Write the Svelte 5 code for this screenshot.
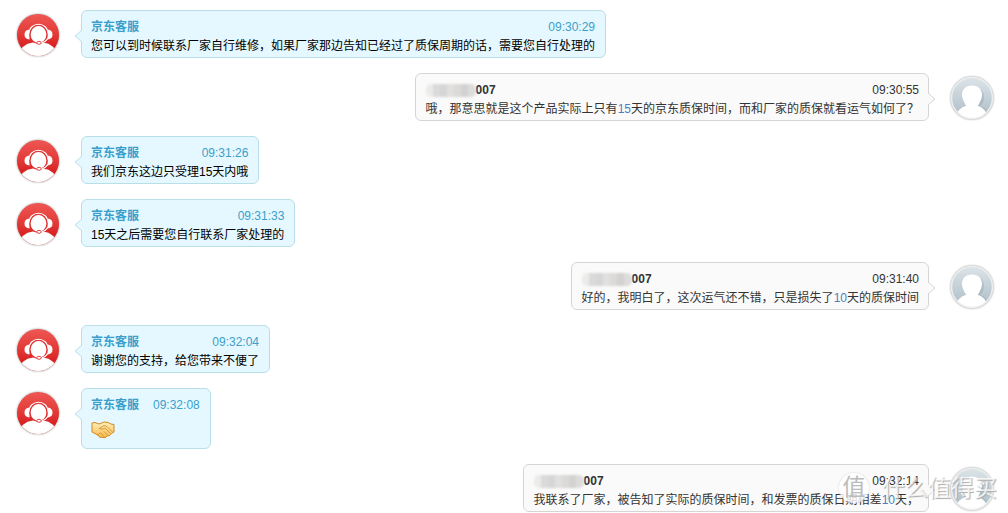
<script lang="ts">
  type Message = {
    from: "agent" | "user";
    time: string;
    text?: string;
    days?: string;
    rest?: string;
    emoji?: boolean;
  };

  const messages: Message[] = [
    { from: "agent", time: "09:30:29", text: "您可以到时候联系厂家自行维修，如果厂家那边告知已经过了质保周期的话，需要您自行处理的" },
    { from: "user", time: "09:30:55", text: "哦，那意思就是这个产品实际上只有", days: "15", rest: "天的京东质保时间，而和厂家的质保就看运气如何了？" },
    { from: "agent", time: "09:31:26", text: "我们京东这边只受理15天内哦" },
    { from: "agent", time: "09:31:33", text: "15天之后需要您自行联系厂家处理的" },
    { from: "user", time: "09:31:40", text: "好的，我明白了，这次运气还不错，只是损失了", days: "10", rest: "天的质保时间" },
    { from: "agent", time: "09:32:04", text: "谢谢您的支持，给您带来不便了" },
    { from: "agent", time: "09:32:08", emoji: true },
    { from: "user", time: "09:32:14", text: "我联系了厂家，被告知了实际的质保时间，和发票的质保日期相差", days: "10", rest: "天，" },
  ];

  // Shades of the mosaic that hides the account name
  const mosaic = ["#ebebe9", "#dadada", "#d6d6d8", "#e2e0de", "#dcdad8", "#d2d2d2", "#dcdcdc"];
</script>

<svg class="defs" width="0" height="0" aria-hidden="true">
  <defs>
    <linearGradient id="red" x1="0" y1="0" x2="0" y2="1">
      <stop offset="0" stop-color="#f05a56" />
      <stop offset="0.5" stop-color="#e23836" />
      <stop offset="0.8" stop-color="#d41c1c" />
    </linearGradient>
    <linearGradient id="slate" x1="0" y1="0" x2="0" y2="1">
      <stop offset="0" stop-color="#dfe6ea" />
      <stop offset="1" stop-color="#a9bac4" />
    </linearGradient>
    <linearGradient id="skin" x1="0" y1="0" x2="0" y2="1">
      <stop offset="0" stop-color="#fff0bd" />
      <stop offset="1" stop-color="#f7b84a" />
    </linearGradient>
    <clipPath id="round"><circle cx="23" cy="23" r="21" /></clipPath>
  </defs>
</svg>

<main class="chat">
  {#each messages as message}
    <article class="row {message.from}">
      {#if message.from === "agent"}
        <svg class="avatar" viewBox="0 0 46 46" role="img" aria-label="京东客服">
          <g clip-path="url(#round)">
            <rect width="46" height="46" fill="url(#red)" />
            <path d="M3 46 Q5 32 18 30.500 H28 Q41 32 43 46Z" fill="#fff" />
          </g>
          <path d="M14 22 C14 9 33 9 33 22" fill="none" stroke="#fff" stroke-width="1.200" />
          <path d="M14.500 17.500 Q9.500 18 9.500 22.500 Q9.500 27 14.500 27.500Z M32.500 17.500 Q37.500 18 37.500 22.500 Q37.500 27 32.500 27.500Z" fill="#fff" />
          <ellipse cx="23.500" cy="22.500" rx="8.500" ry="9" fill="#fff" stroke="#de3030" stroke-width="1.200" />
          <path d="M33 26 Q31 30.500 25 31" fill="none" stroke="#fff" stroke-width="1.200" />
          <ellipse cx="24" cy="30.800" rx="2.200" ry="1.500" fill="#fff" stroke="#dc3434" stroke-width="0.900" />
        </svg>
      {/if}

      <div class="bubble">
        <header>
          {#if message.from === "agent"}
            <b>京东客服</b>
          {:else}
            <b class="account">
              <span class="mask">
                {#each mosaic as shade}
                  <i style="background: {shade}"></i>
                {/each}
              </span>007
            </b>
          {/if}
          <time>{message.time}</time>
        </header>
        {#if message.emoji}
          <p class="emoji">
            <svg viewBox="0 0 24 18" width="24" height="18" role="img" aria-label="握手">
              <path d="M1 2 L4 1.500 L8 3 L13 1 L17 1.500 L20 3 L23 3.500 V11 L20.500 12.500 Q19 15 16.500 15 Q14 17.500 11.500 16.500 Q8.500 17 6.500 14 L3 12 L1 11Z" fill="url(#skin)" stroke="#d0891f" />
              <path d="M8.500 7.500 L13 4.500 L16 5.500 L21 10.500 M8.500 7.500 Q11 9.500 14 7 L19 12 M13 10.500 L16.500 14 M10 12 L13 15.500 M7 14 L9 12" fill="none" stroke="#cf8a22" stroke-width="0.800" stroke-linecap="round" />
            </svg>
          </p>
        {:else}
          <p>{message.text}{#if message.days}<span class="days">{message.days}</span>{message.rest}{/if}</p>
        {/if}
        <svg class="tail" viewBox="0 0 8 12" width="8" height="12" aria-hidden="true">
          <path d="M8 0 L1 6 L8 12" />
        </svg>
      </div>

      {#if message.from === "user"}
        <svg class="avatar" viewBox="0 0 46 46" role="img" aria-label="007">
          <g clip-path="url(#round)">
            <rect width="46" height="46" fill="url(#slate)" />
            <path d="M25 12 Q35 13 35 22 Q35 28 31 31 Q40 34 43 46 H24Z" fill="#8fa3ae" opacity="0.400" />
            <path d="M6 46 Q7 33 18 30.500 H28 Q38 33 40 46Z" fill="#fff" />
            <path d="M23 10.500 C29.500 10.500 33 14.500 33 20 C33 24 31 26 30 29 Q28 33 23 33 Q18 33 16 29 C15 26 13 24 13 20 C13 14.500 16.500 10.500 23 10.500Z" fill="#fff" />
          </g>
          <circle cx="23" cy="23" r="20.500" fill="none" stroke="#eceff0" stroke-width="1.500" />
        </svg>
      {/if}
    </article>
  {/each}

  <div class="watermark">
    <span class="seal">值</span>
    <span>什么值得买</span>
  </div>
</main>

<style>
  :global(body) {
    margin: 0;
    background: #fff;
  }

  .defs {
    position: absolute;
  }

  .chat {
    position: relative;
    display: flex;
    flex-direction: column;
    gap: 15px;
    padding: 10px 13px 0 15px;
    font: 12px/19px "Liberation Sans", "Noto Sans CJK SC", sans-serif;
    color: #333;
  }

  .row {
    display: flex;
    align-items: flex-start;
    gap: 20px;
  }

  .user {
    justify-content: flex-end;
  }

  .avatar {
    flex: none;
    width: 46px;
    height: 46px;
    margin-top: 2px;
    filter: drop-shadow(0 0 1px #999);
  }

  .bubble {
    position: relative;
    padding: 7px 10px 1px 9px;
    border: 1px solid #d5d5d5;
    border-radius: 6px;
    background: #fafafa;
  }

  .user .bubble {
    padding: 7px 9px 1px 10px;
  }

  .agent .bubble {
    border-color: #b8dfe8;
    background: #e5f8ff;
    color: #000;
  }

  header {
    display: flex;
    justify-content: space-between;
    gap: 14px;
  }

  .agent header {
    color: #3b9fcc;
  }

  .account {
    display: flex;
    align-items: center;
  }

  .mask {
    display: flex;
    width: 50px;
    height: 13px;
    overflow: hidden;
    border-radius: 5px;
    filter: blur(1px);
  }

  .mask i {
    flex: 1;
  }

  p {
    margin: 0;
  }

  .emoji {
    height: 32px;
  }

  .emoji svg {
    display: block;
    padding-top: 6px;
  }

  .days {
    color: #4a7fbe;
  }

  .tail {
    position: absolute;
    top: 19px;
    left: -8px;
    fill: #e5f8ff;
    stroke: #b8dfe8;
  }

  .user .tail {
    right: -8px;
    left: auto;
    fill: #fafafa;
    stroke: #d5d5d5;
    transform: scaleX(-1);
  }

  .watermark {
    position: absolute;
    right: 11px;
    bottom: 8px;
    display: flex;
    align-items: center;
    gap: 13px;
    font-size: 23px;
    line-height: 32px;
    color: #fffc;
    text-shadow: 1px 1px 1px #aaa;
  }

  .seal {
    width: 30px;
    height: 30px;
    border-radius: 50%;
    background: #fffc;
    color: #bbb;
    line-height: 28px;
    text-align: center;
    text-shadow: none;
    box-shadow: 0 0 2px #ccc;
  }
</style>
